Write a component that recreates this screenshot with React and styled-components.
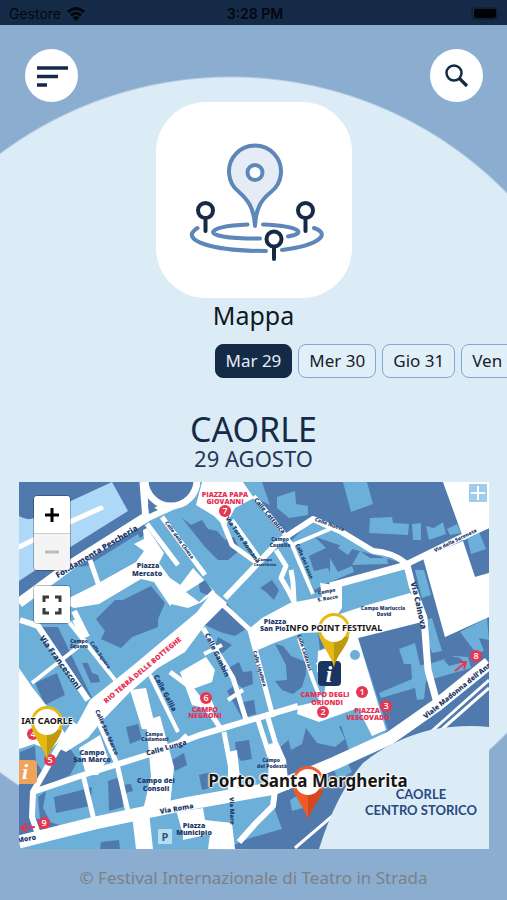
import React, { useState } from "react";
import styled, { createGlobalStyle } from "styled-components";

const color = {
  navy: "#142a47",
  steel: "#8badcf",
  sky: "#dcecf7",
  light: "#6cafd8",
  dark: "#5079ad",
};

const GlobalStyle = createGlobalStyle`
  *, *::before, *::after { box-sizing: border-box; }
  body {
    margin: 0;
    background: ${color.steel};
    font-family: "Noto Sans", "Open Sans", sans-serif;
  }
  button { font: inherit; cursor: pointer; }
`;

const Page = styled.div`
  min-height: 100vh;
  display: flex;
  flex-direction: column;
  overflow: hidden;
  background: radial-gradient(circle at 231px 463px, ${color.sky} 385px, ${color.steel} 387px);
`;

const StatusBar = styled.div`
  display: grid;
  grid-template-columns: 1fr auto 1fr;
  align-items: center;
  height: 25px;
  padding: 2px 6px 0 9px;
  background: ${color.navy};
  color: #04080e;
  font: 400 14px/20px Inter, sans-serif;
`;
const Carrier = styled.span`
  display: flex;
  align-items: center;
  gap: 6px;
`;
const Clock = styled.span`
  font-weight: 600;
`;
const Battery = styled.svg`
  justify-self: end;
`;

const Header = styled.header`
  display: flex;
  justify-content: space-between;
  padding: 24px 24px 0 25px;
`;
const RoundButton = styled.button`
  display: grid;
  place-items: center;
  width: 53px;
  height: 53px;
  padding: 0;
  border: 0;
  border-radius: 50%;
  background: #fff;
  color: ${color.navy};
`;

const Main = styled.main`
  display: flex;
  flex-direction: column;
  align-items: center;
`;
const IconCard = styled.div`
  display: grid;
  place-items: center;
  width: 196px;
  height: 196px;
  border-radius: 50px;
  background: #fff;
`;
const PageTitle = styled.h1`
  margin: 0;
  color: #111820;
  font-size: 25px;
  font-weight: 400;
  line-height: 34px;
`;

const DayTabs = styled.nav`
  display: flex;
  gap: 6px;
  width: 100%;
  margin-top: 12px;
  padding-left: calc(50% - 39px);
  overflow-x: auto;
  scrollbar-width: none;
`;
const DayTab = styled.button`
  flex: none;
  height: 34px;
  padding: 0 10px;
  border: 1px solid ${(p) => (p.$active ? color.navy : "#82a7d0")};
  border-radius: 8px;
  background: ${(p) => (p.$active ? color.navy : "#e1eff9")};
  color: ${(p) => (p.$active ? "#e6edf5" : "#17202a")};
  font-size: 17px;
  line-height: 30px;
`;

const Place = styled.h2`
  margin: 30px 0 0;
  color: ${color.navy};
  font-size: 34px;
  font-weight: 400;
  line-height: 42px;
`;
const PlaceDate = styled.p`
  margin: 0;
  color: #24395a;
  font-size: 22px;
  line-height: 16px;
`;

const MapFrame = styled.section`
  position: relative;
  align-self: stretch;
  margin: 16px 18px 0 19px;
  aspect-ratio: 470 / 367;
  overflow: hidden;
`;
const MapDrawing = styled.svg`
  display: block;
  width: 100%;
  height: 100%;
  font-family: "Open Sans", sans-serif;
`;
const MapControls = styled.div`
  position: absolute;
  top: 13px;
  left: 14px;
  display: flex;
  flex-direction: column;
  gap: 14px;
`;
const ControlGroup = styled.div`
  display: flex;
  flex-direction: column;
  border: 1px solid rgba(0, 0, 0, 0.25);
  border-radius: 4px;
  overflow: hidden;
`;
const ControlButton = styled.button`
  display: grid;
  place-items: center;
  width: 36px;
  height: 37px;
  padding: 0;
  border: 0;
  background: #fff;
  color: #000;

  & + & { border-top: 1px solid #ccc; }
  &:disabled { background: #f4f4f4; color: #bbb; }
`;
const Marker = styled.div`
  position: absolute;
  display: flex;
  justify-content: center;
  transform: translate(-50%, -100%);
`;
const MarkerLabel = styled.span`
  position: absolute;
  top: ${(p) => (p.$large ? 2 : 9)}px;
  color: #161616;
  font-size: ${(p) => (p.$large ? 17 : 9)}px;
  font-weight: 700;
  line-height: ${(p) => (p.$large ? 26 : 12)}px;
  white-space: nowrap;
  text-shadow: 1px 0 1px #fff, -1px 0 1px #fff, 0 1px 1px #fff, 0 -1px 1px #fff, 0 0 3px #fff;
`;

const Footer = styled.footer`
  padding: 17px 0 9px;
  color: #7c8188;
  font-size: 17px;
  line-height: 24px;
  text-align: center;
`;

function MapPinsIcon() {
  return (
    <svg width="196" height="196" viewBox="156 101 196 196" fill="none" strokeLinecap="round" aria-hidden="true">
      <g stroke="#5c87b8" strokeWidth="4">
        <path d="M197.500 227C178 239 211 250 266 250M282 249C320 244 331 233 314 227" />
        <path d="M247.500 223.500C204 225 195 238 260 237.500M263 223.500C299 225 308 232 288 235.500" />
        <path d="M255 225C254 207 248 199 239 191A26 26 0 1 1 271 191C261 199 256 207 255 225Z" fill="#e6ecf6" strokeLinejoin="round" />
        <circle cx="255" cy="171.500" r="7.500" fill="#fff" />
      </g>
      <g stroke="#142a47" strokeWidth="4">
        <circle cx="205.500" cy="209.500" r="7.500" />
        <path d="M205.500 219v11" />
        <circle cx="305.500" cy="209.500" r="7.500" />
        <path d="M305.500 219v11" />
        <circle cx="274" cy="238" r="7.500" fill="#fff" />
        <path d="M274 247v11" />
      </g>
    </svg>
  );
}

function Pin({ bright, shade }) {
  return (
    <svg width="32" height="54" viewBox="0 0 32 54" aria-hidden="true">
      <path d="M16 54C14 43 0 29 0 16a16 16 0 0 1 32 0C32 29 18 43 16 54Z" fill={bright} />
      <path d="M16 24h15C28 35 18 43 16 54Z" fill={shade} />
      <circle cx="16" cy="16" r="13" fill="#fff" />
    </svg>
  );
}

const lightBlocks = [
  "343,482 367,482 373,504 351,512",
  "370,518 392,517 393,523 409,524 408,535 369,533",
  "412,524 421,523 421,540 413,540",
  "426,526 434,528 443,522 446,534 429,540",
  "447,529 457,524 461,533 450,535",
  "338,548 345,540 354,547 348,555",
  "352,565 360,551 370,558 387,558 388,564",
  "330,558 338,572 352,566 354,572 330,582",
  "277,497 295,491 296,504 308,506 308,515 289,518 277,508",
  "467,537 479,532 486,549 471,554",
];
const eastBlocks = [
  "379,693 412,679 411,664 404,664 399,649 415,643 420,665 429,664 454,656 468,657 471,668 426,681 424,699 417,700 415,688 381,698",
  "420,622 432,618 442,651 432,653",
  "460,632 487,618 489,640 479,638 484,651 476,653",
  "415,570 424,570 431,595 422,598",
  "330,712 350,706 353,722 334,728",
];
const darkBlocks = [
  "182,518 191,525 202,520 208,529 217,531 225,540 234,537 240,550 228,560 218,560 205,547 193,532",
  "96,619 115,600 142,600 158,613 158,627 132,637 121,648 101,639 105,631",
  "115,604 151,586 165,603 158,619 141,626 126,615",
  "35,683 57,673 65,695 45,705",
  "42,627 58,627 92,698 85,698",
  "82,663 88,663 92,673 98,675 100,682 91,683",
  "205,625 227,603 246,629 235,636 220,632",
  "218,637 232,645 220,655 215,646",
  "230,667 239,662 243,672 252,671 253,684 242,688 230,677",
  "227,691 235,685 243,702 254,700 256,714 242,718",
  "275,644 283,646 291,656 306,662 306,674 302,687 293,694 282,690 275,681 287,680 286,665",
  "318,632 324,637 328,645 320,650",
  "260,588 272,580 279,590 274,600 266,592",
  "54,797 74,792 92,787 90,806 56,813",
  "108,781 117,778 121,785 131,784 133,791 122,794 123,807 109,811",
  "170,761 184,753 187,765 175,771",
  "38,797 46,791 43,808 52,825 41,829",
  "126,727 138,724 142,739 130,744",
  "235,742 249,740 252,759 241,761 236,753",
  "101,842 119,840 120,849 100,849",
  "191,822 204,820 206,830 191,834",
  "199,775 211,772 214,787 202,790",
  "20,752 35,746 36,762 45,775 32,788 19,784",
];
const plazas = [
  "202,482 243,482 254,498 235,508 225,527 214,516 196,505",
  "143,530 147,528 164,553 159,563 170,578 185,588 170,606 154,582 141,579 99,604 74,608 61,602 93,586 136,562 144,551 134,544 144,539",
  "193,568 215,592 202,602 188,608 171,604 178,588",
  "75,728 90,700 130,668 197,612 213,591 227,603 205,625 185,652 158,668 130,692 101,722 88,738 66,752 58,748",
  "443,482 489,482 489,527 464,540",
  "423,558 463,541 475,577 489,573 489,617 445,637",
  "250,628 262,618 290,603 322,597 320,583 342,586 342,608 326,632 302,633 274,643 258,650",
  "334,616 364,606 410,593 418,601 422,622 358,638 386,730 372,736 358,708 319,722 297,714 298,706 323,700 327,677 317,672 318,651 338,645",
  "19,668 32,687 50,710 66,735 50,750 34,744 19,749",
  "180,672 206,657 215,670 212,682 193,689 196,698 210,696 216,711 192,705",
  "130,690 146,688 156,730 142,729",
  "79,748 100,735 108,758 98,775 86,775",
  "146,720 160,716 174,767 170,806 144,806 151,776",
  "228,752 237,750 241,787 228,790",
  "269,744 278,742 286,760 289,790 268,790",
  "183,811 203,808 205,820 232,823 235,849 208,849 210,834 183,840",
  "132,815 149,812 153,849 136,849",
];
const streets = [
  [10, "M19 603L72 564L148 516L172 505"],
  [7, "M143 482L146 520"],
  [5, "M147 524L178 565M222 520L232 545L257 563M162 517L205 575M90 560L99 586"],
  [6, "M225 598L262 559L278 542L313 519L340 531L373 551Q392 552 407 564L460 538L489 525"],
  [7, "M330 586L407 565L412 585L424 618L428 670L437 703"],
  [4, "M254 496L283 532L292 545L313 594M292 545L330 529M232 520L260 559"],
  [5, "M276 550L286 566L281 578L288 590L294 602L293 582L291 570"],
  [6, "M20 620L38 626L88 700M74 611L87 637"],
  [4, "M32 683L87 640M65 617L115 680M150 675L178 732M84 638L74 620"],
  [5, "M170 672L190 687L213 717L221 729M203 628L233 678L247 723M221 603L250 630L273 717"],
  [4, "M204 654L222 645M299 638L313 680L321 700M228 700L243 690M317 665L330 655"],
  [6, "M33 792L83 775L147 755L200 735L298 706M75 723L57 750L33 792L32 817L38 834"],
  [5, "M83 775L94 820M117 764L129 816M99 723L117 764M180 742L187 735M224 732L235 790M258 720L270 757M268 718L277 748"],
  [13, "M19 842L95 823L185 804L275 788L335 763L390 738L437 705L489 663"],
  [6, "M275 790L273 806L255 824L239 842M178 806L187 838"],
  [3, "M489 680L433 730L295 848M489 688L440 731"],
];
const lightCorners = [
  "128,511 150,530 130,547 92,565 78,567",
];

const streetLabels = [
  ["Fondamenta Pescheria", 98, 554, -31, 8],
  ["Piazza", 148, 568, 0, 7],
  ["Mercato", 147, 576, 0, 7],
  ["Calle della Chiesa", 178, 541, 54, 5],
  ["Via Torre Romana", 241, 541, 55, 6],
  ["Calle Cattolica", 268, 517, 50, 6],
  ["Campo", 280, 541, 0, 5],
  ["Castello", 280, 547, 0, 5],
  ["Campo", 265, 561, 0, 4],
  ["Castelletto", 265, 566, 0, 4],
  ["Calle del Sasso", 303, 562, 67, 5],
  ["Calle Nuova", 329, 526, 20, 5],
  ["Campo", 327, 593, -10, 5],
  ["S. Rocco", 328, 600, -10, 5],
  ["Via della Serenata", 456, 542, -26, 5],
  ["Via Calnova", 416, 606, 77, 8],
  ["Campo Mariuccia", 383, 610, 0, 5],
  ["David", 384, 616, 0, 5],
  ["Piazza", 275, 624, 0, 7],
  ["San Pio", 273, 631, 0, 7],
  ["Via Francesconi", 58, 664, 54, 8],
  ["Campo", 79, 643, 0, 5],
  ["Squero", 79, 648, 0, 5],
  ["Calle Squero", 99, 656, 55, 5],
  ["Calle Gallia", 163, 694, 62, 7],
  ["Calle Gambin", 215, 656, 64, 7],
  ["Calle Liquilera", 258, 669, 74, 5],
  ["Calle Calderari", 303, 653, 72, 5],
  ["Viale Madonna dell’Angelo", 463, 689, -39, 7],
  ["Campo", 92, 755, 0, 7],
  ["San Marco", 92, 762, 0, 7],
  ["Calle San Marco", 105, 733, 66, 6],
  ["Campo", 154, 736, 0, 5],
  ["Cadamosti", 155, 741, 0, 5],
  ["Calle Lunga", 167, 750, -16, 7],
  ["Campo dei", 156, 783, 0, 7],
  ["Consoli", 156, 791, 0, 7],
  ["Via Roma", 177, 811, -10, 7],
  ["Piazza", 194, 828, 0, 7],
  ["Municipio", 194, 835, 0, 7],
  ["Campo", 271, 762, 0, 5],
  ["del Podestà", 272, 768, 0, 5],
  ["Via Mare", 230, 811, 88, 6],
  ["Moro", 27, 841, -10, 7],
];
const redLabels = [
  ["PIAZZA PAPA", 225, 497, 0, 7],
  ["GIOVANNI", 225, 504, 0, 7],
  ["RIO TERRÀ DELLE BOTTEGHE", 144, 672, -40, 7],
  ["CAMPO", 205, 712, 0, 7],
  ["NEGRONI", 205, 718, 0, 7],
  ["CAMPO DEGLI", 325, 697, 0, 7],
  ["ORIONDI", 327, 705, 0, 7],
  ["PIAZZA", 367, 713, 0, 7],
  ["VESCOVADO", 368, 720, 0, 7],
];
const stops = [
  [7, 225, 511], [6, 206, 698], [1, 362, 692], [2, 323, 712], [3, 386, 706],
  [8, 476, 656], [4, 33, 734], [5, 50, 760], [9, 44, 823],
];

function Labels({ items, fill }) {
  return (
    <g fill={fill} fontWeight="800" textAnchor="middle">
      {items.map(([text, x, y, turn, size]) => (
        <text key={text + x + y} fontSize={size} transform={`translate(${x} ${y}) rotate(${turn})`}>
          {text}
        </text>
      ))}
    </g>
  );
}

function Shapes({ items, fill }) {
  return (
    <g fill={fill}>
      {items.map((points) => (
        <polygon key={points} points={points} />
      ))}
    </g>
  );
}

function TownMap() {
  return (
    <MapDrawing viewBox="19 482 470 367" preserveAspectRatio="xMidYMid slice" role="img" aria-label="Mappa di Caorle, centro storico">
      <rect x="19" y="482" width="470" height="367" fill={color.light} />
      <g fill={color.dark}>
        <path d="M19 482H202L172 505L148 516L72 562L19 602Z" />
        <path d="M262 482H443L464 540L407 565L373 551L313 519L291 541L255 498L270 505Z" />
        <path d="M292 545L313 536L345 547L407 564L330 586L313 594Z" />
        <path d="M407 562L424 556L445 637L489 617V849H225L250 838L282 829L275 810V790L352 760L388 730L358 638L424 621Z" />
        <path d="M463 541L489 527V573L475 577Z" />
        <path d="M275 752L305 725L340 722L352 760L290 784Z" />
        <path d="M33 792L57 750L66 743L78 760L70 775ZM32 817L70 828L55 833L38 832ZM19 775L33 780L33 820L38 838L19 842Z" />
      </g>
      <path d="M330 587L407 568L413 592L364 606L334 614Z" fill={color.light} />
      <path d="M19 516Q27 521 34 518L112 482L128 511L72 546L19 581Z" fill="#aed8f7" />
      <path d="M19 547L72 521L101 508" fill="none" stroke="#fff" strokeWidth="5" strokeLinecap="round" />
      <path d="M292 548L313 535L326 548L309 556L314 571L328 568L333 580L314 590Z" fill={color.light} />
      <Shapes items={lightCorners} fill={color.dark} />
      <path d="M93 562L138 534L143 545L134 549L139 558L99 584Z" fill={color.light} />
      <Shapes items={lightBlocks} fill={color.light} />
      <Shapes items={eastBlocks} fill={color.light} />
      <Shapes items={darkBlocks} fill={color.dark} />
      <path d="M286 730L300 718L336 720L345 739L335 747L317 743L306 728L302 744L291 750ZM290 800L307 790L306 807L292 811ZM334 770L347 761L352 772L338 780Z" fill={color.light} />
      <path d="M444 660L450 656L460 658L464 662L449 666Z" fill={color.dark} />
      <Shapes items={plazas} fill="#fff" />
      <g fill="none" stroke="#fff" strokeLinejoin="round">
        {streets.map(([width, d]) => (
          <path key={d} d={d} strokeWidth={width} />
        ))}
      </g>
      <circle cx="171" cy="480" r="26" fill={color.dark} stroke="#fff" strokeWidth="7" />
      <path d="M148 504L158 510L149 514Z" fill={color.dark} />
      <path d="M186 592L205 580L212 590L199 602Z" fill={color.light} />
      <path d="M199 584L205 580L212 590L207 595L200 592Z" fill={color.dark} />
      <circle cx="355" cy="655" r="5" fill={color.light} />
      <path d="M489 727Q462 724 430 730Q391 740 363 763Q336 794 319 849H489Z" fill={color.sky} />
      <rect x="469" y="484" width="18" height="18" fill="#9dccec" />
      <path d="M478 486v14M471 493h14" stroke="#fff" strokeWidth="2" />
      <Labels items={streetLabels} fill="#1f3b6b" />
      <Labels items={redLabels} fill="#e62f52" />
      {stops.map(([number, x, y]) => (
        <g key={number}>
          <circle cx={x} cy={y} r="6" fill="#e63652" />
          <text x={x} y={y + 3} fill="#fff" fontSize="9" fontWeight="600" textAnchor="middle">{number}</text>
        </g>
      ))}
      <g fill="none" stroke="#e63652" strokeWidth="2">
        <path d="M455 671L465 663M459 662L466 662L464 669M35 827L22 828M27 823L21 828L27 832" />
      </g>
      <rect x="318" y="661" width="23" height="25" rx="4" fill="#1b3561" />
      <rect x="12" y="760" width="25" height="24" rx="4" fill="#efa25b" />
      <g fill="#fff" fontFamily="Liberation Serif, serif" fontStyle="italic" fontWeight="700" textAnchor="middle">
        <text x="329" y="682" fontSize="23">i</text>
        <text x="25" y="779" fontSize="22">i</text>
      </g>
      <rect x="158" y="829" width="14" height="15" rx="1" fill="#b7ddf2" />
      <text x="165" y="841" fontSize="11" fontWeight="700" fill="#31577f" textAnchor="middle">P</text>
      <g fill="#29487f" fontFamily="Lato, sans-serif" fontSize="13" fontWeight="700" textAnchor="middle">
        <text x="421" y="799">CAORLE</text>
        <text x="421" y="815">CENTRO STORICO</text>
      </g>
    </MapDrawing>
  );
}

const markers = [
  { name: "IAT CAORLE", x: 28, y: 278, bright: "#e5b912", shade: "#bd9b10" },
  { name: "INFO POINT FESTIVAL", x: 315, y: 185, bright: "#e5b912", shade: "#bd9b10" },
  { name: "Porto Santa Margherita", x: 289, y: 338, bright: "#ef5a28", shade: "#d3481d", large: true },
];
const days = ["Mar 29", "Mer 30", "Gio 31", "Ven 01"];

export default function App() {
  const [day, setDay] = useState(days[0]);
  return (
    <Page>
      <GlobalStyle />
      <StatusBar>
        <Carrier>
          Gestore
          <svg width="18" height="14" viewBox="0 0 18 14" fill="none" stroke="#04080e" strokeWidth="3" aria-hidden="true">
            <path d="M1 5Q9-2 17 5M4 8.500Q9 4 14 8.500" />
            <path d="M9 14L5.500 10.500Q9 8 12.500 10.500Z" fill="#04080e" stroke="none" />
          </svg>
        </Carrier>
        <Clock>3:28 PM</Clock>
        <Battery width="30" height="13" viewBox="0 0 30 13" aria-hidden="true">
          <rect x="1" y="1" width="25" height="11" rx="3" fill="none" stroke="#0c1929" />
          <rect x="3" y="2" width="22" height="9" rx="2" fill="#010305" />
          <path d="M28 5q2 1 0 3Z" fill="#0c1929" />
        </Battery>
      </StatusBar>
      <Header>
        <RoundButton aria-label="Menu">
          <svg width="32" height="24" viewBox="0 0 32 24" stroke="currentColor" strokeWidth="3.500" aria-hidden="true">
            <path d="M1 4h31M1 12.500h21M1 21h10" />
          </svg>
        </RoundButton>
        <RoundButton aria-label="Cerca">
          <svg width="24" height="24" viewBox="0 0 24 24" fill="none" stroke="currentColor" aria-hidden="true">
            <circle cx="9" cy="9" r="7.500" strokeWidth="2.500" />
            <path d="M14.500 14.500l7.500 7.500" strokeWidth="3.200" />
          </svg>
        </RoundButton>
      </Header>
      <Main>
        <IconCard><MapPinsIcon /></IconCard>
        <PageTitle>Mappa</PageTitle>
        <DayTabs aria-label="Giorni">
          {days.map((name) => (
            <DayTab key={name} $active={name === day} aria-pressed={name === day} onClick={() => setDay(name)}>
              {name}
            </DayTab>
          ))}
        </DayTabs>
        <Place>CAORLE</Place>
        <PlaceDate>29 AGOSTO</PlaceDate>
        <MapFrame>
          <TownMap />
          {markers.map((m) => (
            <Marker key={m.name} style={{ left: `${(m.x / 470) * 100}%`, top: `${(m.y / 367) * 100}%` }}>
              <Pin bright={m.bright} shade={m.shade} />
              <MarkerLabel $large={m.large}>{m.name}</MarkerLabel>
            </Marker>
          ))}
          <MapControls>
            <ControlGroup>
              <ControlButton aria-label="Ingrandisci">
                <svg width="16" height="16" viewBox="0 0 16 16" stroke="currentColor" strokeWidth="3" aria-hidden="true">
                  <path d="M8 1v14M1 8h14" />
                </svg>
              </ControlButton>
              <ControlButton aria-label="Riduci" disabled>
                <svg width="16" height="16" viewBox="0 0 16 16" stroke="currentColor" strokeWidth="3" aria-hidden="true">
                  <path d="M1 8h14" />
                </svg>
              </ControlButton>
            </ControlGroup>
            <ControlGroup>
              <ControlButton aria-label="Schermo intero">
                <svg width="20" height="20" viewBox="0 0 20 20" fill="none" stroke="#3b3b3b" strokeWidth="3" aria-hidden="true">
                  <path d="M2 7V2h5M13 2h5v5M18 13v5h-5M7 18H2v-5" />
                </svg>
              </ControlButton>
            </ControlGroup>
          </MapControls>
        </MapFrame>
      </Main>
      <Footer>© Festival Internazionale di Teatro in Strada</Footer>
    </Page>
  );
}
